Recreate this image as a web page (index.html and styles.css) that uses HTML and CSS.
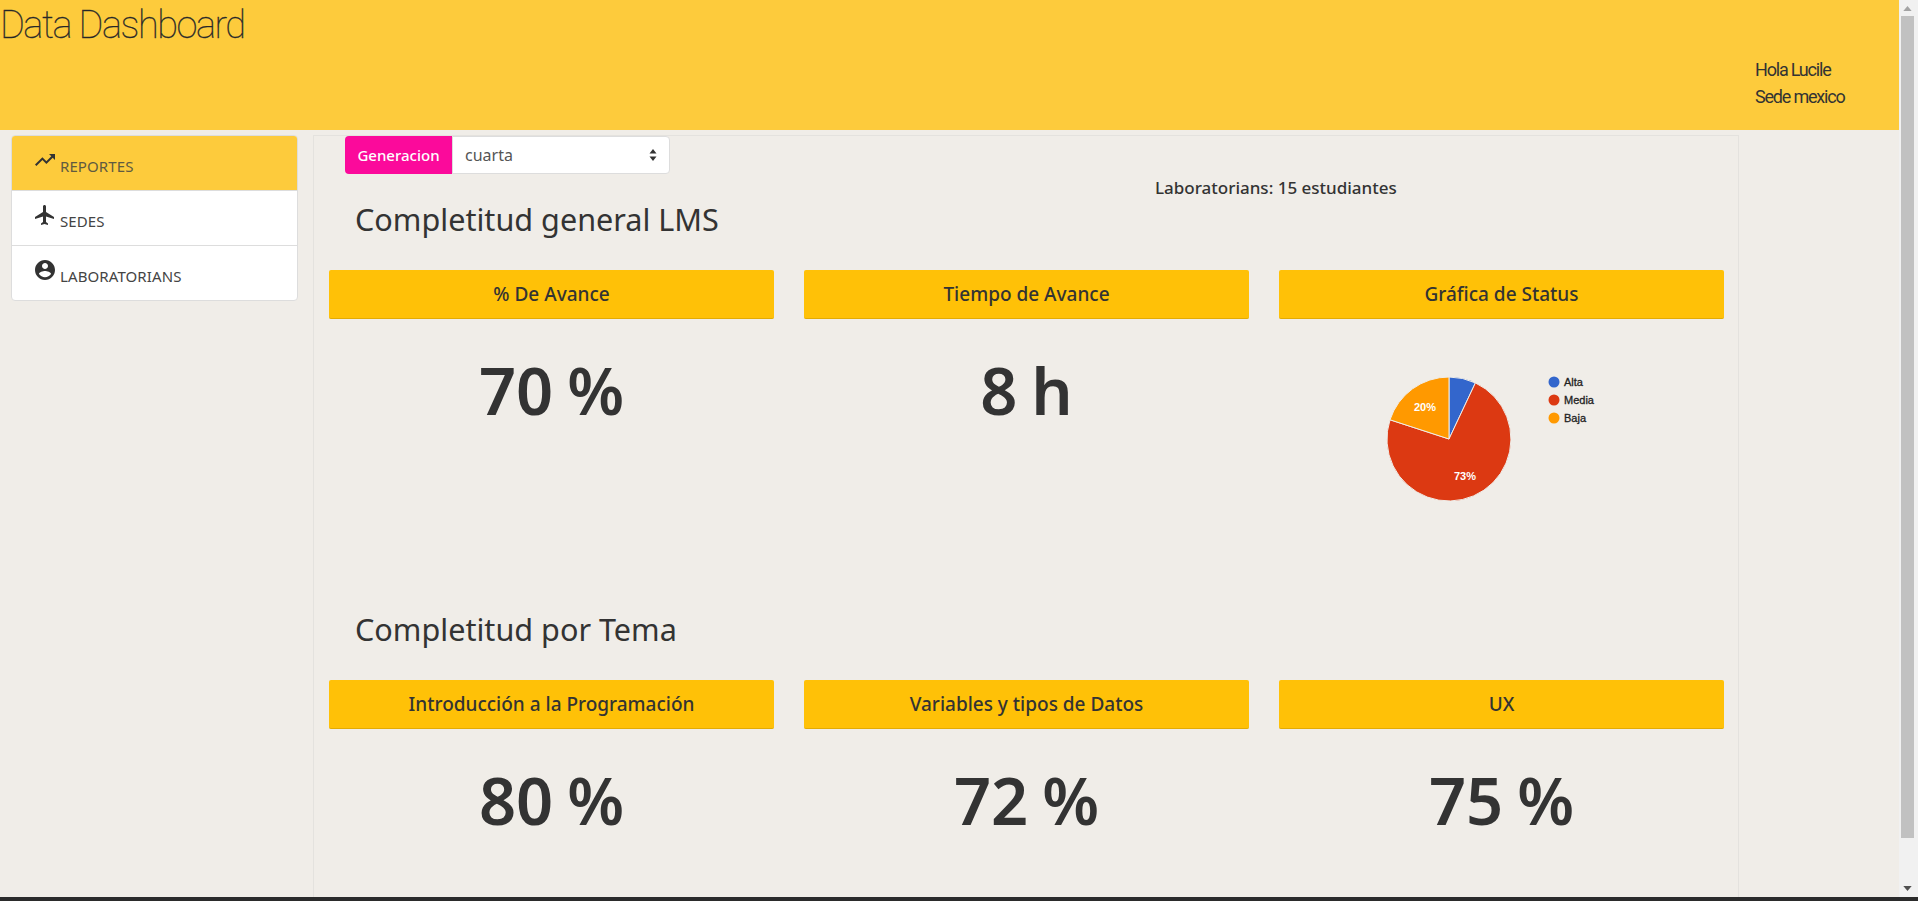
FILE: index.html
```html
<!DOCTYPE html>
<html lang="en">
<head>
  <meta charset="UTF-8">
  <title>Data Dashboard</title>
  <link rel="stylesheet" href="styles.css">
</head>
<body>
  <div class="window">
    <div class="page">
      <header class="topbar">
        <h1 class="brand">Data Dashboard</h1>
        <div class="greeting">
          <p>Hola Lucile</p>
          <p>Sede mexico</p>
        </div>
      </header>

      <div class="layout">
        <nav class="sidebar">
          <a class="nav-item active" href="#">
            <svg class="nav-icon" viewBox="0 0 24 24"><path d="M16 6l2.29 2.29-4.88 4.88-4-4L2 16.59 3.41 18l6-6 4 4 6.3-6.29L22 12V6z"/></svg>
            <span>REPORTES</span>
          </a>
          <a class="nav-item" href="#">
            <svg class="nav-icon" viewBox="0 0 24 24"><path d="M21 16v-2l-8-5V3.5c0-.83-.67-1.5-1.5-1.5S10 2.67 10 3.5V9l-8 5v2l8-2.5V19l-2 1.5V22l3.5-1 3.5 1v-1.5L13 19v-5.5l8 2.5z"/></svg>
            <span>SEDES</span>
          </a>
          <a class="nav-item" href="#">
            <svg class="nav-icon" viewBox="0 0 24 24"><path d="M12 2C6.48 2 2 6.48 2 12s4.48 10 10 10 10-4.48 10-10S17.52 2 12 2zm0 3c1.66 0 3 1.34 3 3s-1.34 3-3 3-3-1.34-3-3 1.34-3 3-3zm0 14.2c-2.5 0-4.71-1.28-6-3.22.03-1.99 4-3.08 6-3.08 1.99 0 5.97 1.09 6 3.08-1.29 1.94-3.5 3.22-6 3.22z"/></svg>
            <span>LABORATORIANS</span>
          </a>
        </nav>

        <main class="panel">
          <div class="filter">
            <span class="filter-label">Generacion</span>
            <div class="filter-select">
              <span>cuarta</span>
              <svg class="updown" viewBox="0 0 8 12"><path d="M4 0l3.5 4.5h-7zM4 12L.5 7.500h7z"/></svg>
            </div>
          </div>
          <p class="count">Laboratorians: 15 estudiantes</p>

          <h2 class="section-title">Completitud general LMS</h2>
          <section class="cards">
            <div class="card">
              <h3 class="card-head">% De Avance</h3>
              <p class="big">70 %</p>
            </div>
            <div class="card">
              <h3 class="card-head">Tiempo de Avance</h3>
              <p class="big">8 h</p>
            </div>
            <div class="card">
              <h3 class="card-head">Gráfica de Status</h3>
              <svg class="pie" viewBox="0 0 445 160">
                <path class="slice-blue" d="M170 98V36A62 62 0 0 1 196.400 41.900Z"/>
                <path class="slice-red" d="M170 98L196.400 41.900A62 62 0 1 1 111 78.800Z"/>
                <path class="slice-orange" d="M170 98L111 78.800A62 62 0 0 1 170 36Z"/>
                <text class="pie-pct" x="146" y="70">20%</text>
                <text class="pie-pct" x="186" y="139">73%</text>
                <circle class="slice-blue" cx="275" cy="41" r="5.500"/>
                <text class="legend" x="285" y="45">Alta</text>
                <circle class="slice-red" cx="275" cy="59" r="5.500"/>
                <text class="legend" x="285" y="63">Media</text>
                <circle class="slice-orange" cx="275" cy="77" r="5.500"/>
                <text class="legend" x="285" y="81">Baja</text>
              </svg>
            </div>
          </section>

          <h2 class="section-title">Completitud por Tema</h2>
          <section class="cards">
            <div class="card">
              <h3 class="card-head">Introducción a la Programación</h3>
              <p class="big">80 %</p>
            </div>
            <div class="card">
              <h3 class="card-head">Variables y tipos de Datos</h3>
              <p class="big">72 %</p>
            </div>
            <div class="card">
              <h3 class="card-head">UX</h3>
              <p class="big">75 %</p>
            </div>
          </section>
        </main>
      </div>
    </div>

    <div class="scrollbar">
      <svg class="arrow" viewBox="0 0 10 6"><path d="M5 0l5 6H0z"/></svg>
      <div class="thumb"></div>
      <svg class="arrow down" viewBox="0 0 10 6"><path d="M5 6L0 0h10z"/></svg>
    </div>
  </div>
  <div class="taskbar"></div>
</body>
</html>
```

FILE: styles.css
```css
* { box-sizing: border-box; }
html, body { height: 100%; margin: 0; overflow: hidden; }
body { font-family: "Noto Sans", Arial, sans-serif; color: #333; background: #f0ede8; display: flex; flex-direction: column; }
p, h1, h2, h3 { margin: 0; font-weight: normal; }
.window { flex: 1; min-height: 0; display: flex; }
.page { flex: 1; min-width: 0; overflow: hidden; }
.taskbar { height: 4px; background: #2b2b2b; }

.topbar { height: 130px; background: #fdcb3c; display: flex; justify-content: space-between; }
.brand { font-family: Roboto, sans-serif; font-weight: 100; font-size: 38px; letter-spacing: -1.5px; line-height: 50px; color: #222; -webkit-text-stroke: 0.3px #333; }
.greeting { width: 144px; padding-top: 56px; font-family: Roboto, sans-serif; font-weight: 300; font-size: 18px; letter-spacing: -1.2px; line-height: 27px; }

.layout { display: flex; align-items: flex-start; padding-top: 5px; }
.sidebar { width: 287px; margin-left: 11px; border: 1px solid #ddd; border-radius: 4px; background: #fff; overflow: hidden; }
.nav-item { height: 55px; padding-left: 21px; display: flex; align-items: center; gap: 3px; color: #444; font-size: 15px; letter-spacing: 0.1px; text-decoration: none; border-top: 1px solid #ddd; }
.nav-item:first-child { border-top: 0; height: 54px; }
.nav-item.active { background: #fdcb3c; color: #605a40; }
.nav-icon { width: 24px; height: 24px; fill: #333; margin-top: -6px; flex: none; }
.nav-item span { margin-top: 6px; }

.panel { width: 1426px; height: 766px; margin-left: 15px; padding: 0 15px; border: 1px solid #e4e2de; border-bottom: 0; }
.filter { display: flex; height: 38px; margin-left: 16px; }
.filter-label { width: 107px; background: #fb0a9b; color: #fff; border-radius: 4px 0 0 4px; font-size: 15px; font-weight: 500; line-height: 38px; text-align: center; }
.filter-select { width: 218px; background: #fff; border: 1px solid #ddd; border-radius: 0 4px 4px 0; padding: 0 12px; font-size: 16px; color: #555; display: flex; align-items: center; justify-content: space-between; }
.updown { width: 8px; height: 12px; fill: #333; }
.count { height: 24px; margin: 2px 0 0 826px; font-size: 17px; line-height: 24px; font-weight: 500; }
.section-title { height: 38px; padding-left: 26px; margin-bottom: 32px; font-size: 30.600px; line-height: 38px; }

.cards { display: grid; grid-template-columns: repeat(3, 445px); gap: 30px; height: 340px; }
.card-head { height: 49px; background: #ffc107; border-radius: 2px; border-bottom: 1px solid #e2ab05; text-align: center; font-size: 19px; font-weight: 500; line-height: 49px; }
.big { margin-top: 32px; font-size: 65px; line-height: 78px; font-weight: 600; word-spacing: -3px; text-align: center; }

.pie { display: block; width: 445px; height: 160px; margin-top: 22px; }
.slice-blue { fill: #3366cc; }
.slice-red { fill: #dc3912; }
.slice-orange { fill: #ff9900; }
.slice-blue, .slice-red, .slice-orange { stroke: #f0ede8; stroke-width: 1; }
circle.slice-blue, circle.slice-red, circle.slice-orange { stroke: none; }
.pie-pct { font-family: "Liberation Sans", Arial, sans-serif; font-size: 11px; font-weight: bold; fill: #fff; text-anchor: middle; }
.legend { font-family: "Liberation Sans", Arial, sans-serif; font-size: 11px; fill: #222; stroke: #222; stroke-width: 0.3; }

.scrollbar { width: 19px; background: #f1f1f1; display: flex; flex-direction: column; align-items: flex-start; padding: 0 4px 0 2px; }
.arrow { width: 9px; height: 5px; margin: 6px 0 5px 2px; fill: #a3a3a3; flex: none; }
.arrow.down { margin: auto 0 6px 2px; fill: #505050; }
.thumb { width: 13px; height: 822px; background: #c1c1c1; flex: none; }
```
